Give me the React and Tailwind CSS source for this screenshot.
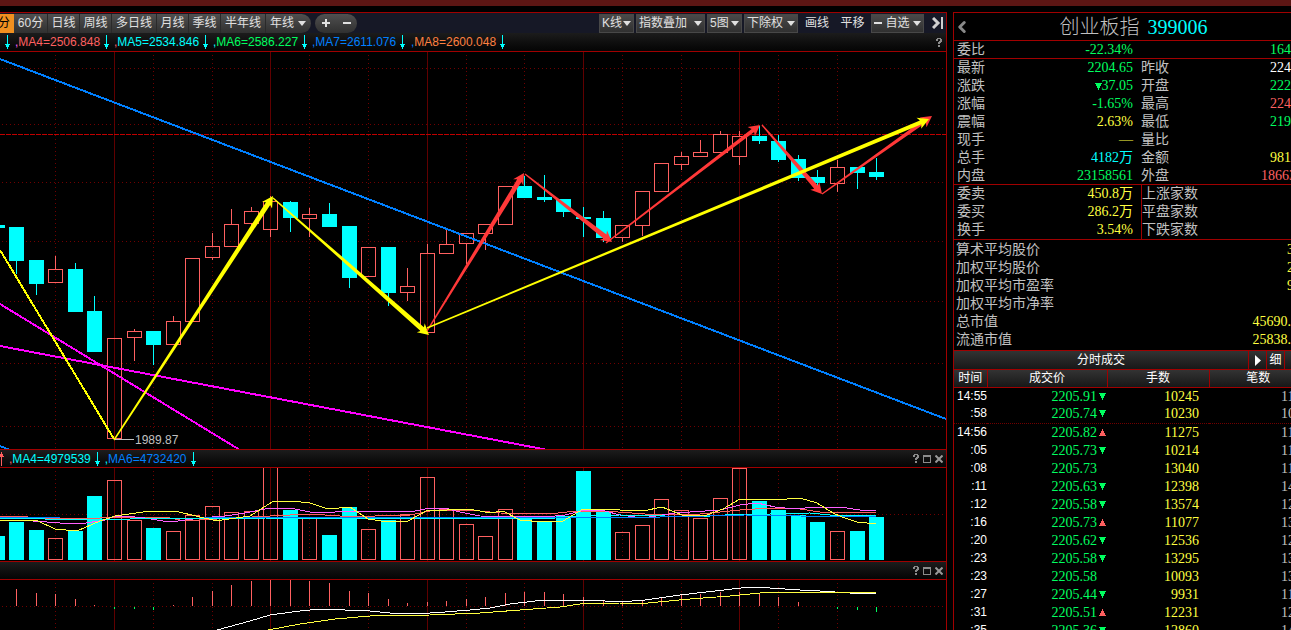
import React from 'react'
import { ChevronLeft } from 'lucide-react'

/* x, high, top, bottom, low, volume top, rising */
const candles = [
  [-10, 225, 225, 228, 228, 536, 0],
  [9, 227, 227, 261, 274, 522, 0],
  [29, 260, 260, 284, 295, 530, 0],
  [48, 256, 269, 283, 283, 538, 1],
  [68, 263, 269, 312, 312, 531, 0],
  [87, 296, 311, 352, 352, 496, 0],
  [107, 338, 338, 439, 439, 480, 1],
  [127, 329, 331, 338, 361, 520, 1],
  [146, 331, 331, 345, 365, 528, 0],
  [166, 316, 321, 345, 345, 531, 1],
  [185, 258, 258, 322, 322, 515, 1],
  [205, 233, 246, 258, 260, 506, 1],
  [224, 209, 224, 247, 247, 512, 1],
  [244, 207, 211, 224, 227, 511, 1],
  [263, 196, 201, 230, 237, 467, 1],
  [283, 201, 202, 218, 232, 510, 0],
  [302, 208, 214, 219, 237, 518, 1],
  [322, 203, 214, 227, 227, 535, 0],
  [342, 226, 226, 278, 288, 507, 0],
  [361, 247, 247, 277, 277, 529, 1],
  [381, 247, 247, 293, 306, 520, 0],
  [400, 268, 286, 293, 301, 514, 1],
  [420, 244, 253, 333, 333, 477, 1],
  [439, 229, 244, 254, 254, 509, 1],
  [459, 233, 233, 244, 264, 524, 1],
  [478, 224, 224, 234, 250, 536, 1],
  [498, 186, 186, 225, 225, 509, 1],
  [517, 176, 186, 198, 198, 518, 0],
  [537, 175, 197, 200, 202, 522, 0],
  [556, 199, 199, 212, 217, 516, 0],
  [576, 207, 217, 219, 237, 471, 0],
  [596, 211, 218, 238, 242, 512, 0],
  [615, 225, 225, 238, 242, 532, 1],
  [635, 191, 191, 226, 236, 525, 1],
  [654, 163, 163, 192, 192, 499, 1],
  [674, 152, 156, 165, 170, 510, 1],
  [693, 140, 152, 157, 157, 518, 1],
  [713, 131, 134, 153, 153, 498, 1],
  [732, 131, 136, 157, 165, 468, 1],
  [752, 126, 136, 141, 144, 501, 0],
  [771, 135, 141, 160, 162, 510, 0],
  [791, 155, 159, 178, 181, 515, 0],
  [810, 170, 177, 183, 186, 522, 0],
  [830, 160, 167, 184, 192, 531, 1],
  [850, 167, 167, 173, 189, 531, 0],
  [869, 158, 172, 177, 180, 517, 0],
]

/* MACD bars: x, y of the tip */
const macd = [
  [16, 589], [36, 593], [55, 594], [75, 599], [94, 605], [114, 608], [134, 608],
  [153, 609], [173, 605], [192, 597], [212, 591], [231, 585], [251, 581],
  [270, 580], [290, 580], [309, 581], [329, 583], [349, 591], [368, 593],
  [388, 599], [407, 603], [427, 602], [446, 601], [466, 599], [485, 597],
  [505, 593], [524, 592], [544, 592], [563, 594], [583, 597], [603, 601],
  [622, 602], [642, 600], [661, 597], [681, 595], [700, 594], [720, 592],
  [739, 592], [759, 593], [778, 597], [798, 602], [837, 608], [857, 609],
  [876, 611],
]

const volumeLines = [
  ['#ff6060', '0,516 20,516 35,518 100,518 130,517 165,517 180,520 200,520 235,518 270,516 310,514 340,516 375,516 410,515 430,511 460,510 480,511 500,513 550,514 575,511 605,511 645,514 700,514 740,510 770,508 800,509 820,512 876,512'],
  ['#ff60ff', '0,520 33,521 60,523 80,524 105,520 115,516 125,516 145,518 163,521 178,521 200,518 225,516 245,513 270,508 290,508 310,512 325,513 345,511 395,511 410,512 425,509 445,508 460,512 480,516 545,517 565,515 585,510 605,511 620,515 643,518 675,513 705,511 720,510 740,505 757,503 775,507 795,509 815,507 840,507 860,510 876,511'],
  ['#00ffff', '0,518 45,519 130,519 265,518 320,519 417,518 475,518 540,519 585,516 620,515 665,516 710,516 740,514 770,514 810,513 830,515 876,515'],
  ['#0080ff', '0,517 60,518 200,518 300,517 500,517 660,517 705,516 745,515 800,516 876,517'],
  ['#ffff40', '0,520 33,520 38,521 55,529 77,531 100,521 115,516 150,511 175,511 200,517 213,520 222,520 250,516 272,502 292,501 310,503 328,509 350,507 368,519 388,522 408,521 428,510 447,510 467,509 480,511 490,513 503,511 520,520 543,522 563,521 583,509 607,509 620,510 643,511 662,507 682,515 707,515 723,509 740,499 787,499 800,498 817,503 833,513 842,517 857,522 876,524'],
]

const gridDotted = [55, 153, 212, 309, 368, 466, 524, 622, 681, 778, 837]
const gridSolid = [114, 270, 427, 583, 739]

const ticks = [
  ['14:55', '2205.91', 'down', '10245', '11'],
  [':58', '2205.74', 'down', '10230', '10'],
  ['14:56', '2205.82', 'up', '11275', '11'],
  [':05', '2205.73', 'down', '10214', '11'],
  [':08', '2205.73', '', '13040', '11'],
  [':11', '2205.63', 'down', '12398', '14'],
  [':12', '2205.58', 'down', '13574', '12'],
  [':16', '2205.73', 'up', '11077', '13'],
  [':20', '2205.62', 'down', '12536', '12'],
  [':23', '2205.58', 'down', '13295', '13'],
  [':23', '2205.58', '', '10093', '13'],
  [':27', '2205.44', 'down', '9931', '11'],
  [':31', '2205.51', 'up', '12231', '12'],
  [':35', '2205.36', 'down', '12860', '14'],
]

const green = 'text-[#00ff60]'
const red = 'text-[#ff6060]'
const yellow = 'text-[#ffff40]'
const cyan = 'text-[#00ffff]'

const Grid = ({ top, bottom, rows }) => (
  <g shapeRendering="crispEdges">
    {gridSolid.map(x => (
      <rect key={x} x={x} y={top} width="1" height={bottom - top} fill="#600000" />
    ))}
    {gridDotted.map(x => (
      <line key={x} x1={x + 0.5} x2={x + 0.5} y1={top + 3} y2={bottom} stroke="#700000" strokeDasharray="1 3" />
    ))}
    {rows.map(y => (
      <line key={y} x1="2" x2="944" y1={y + 0.5} y2={y + 0.5} stroke="#700000" strokeDasharray="1 3" />
    ))}
  </g>
)

/* Arrow whose shaft widens towards the head */
const Arrow = ({ from, to, w, color }) => {
  const [x1, y1] = from
  const [x2, y2] = to
  const len = Math.hypot(x2 - x1, y2 - y1)
  const ux = (x2 - x1) / len
  const uy = (y2 - y1) / len
  const at = (d, side) => `${x1 + ux * d - uy * side},${y1 + uy * d + ux * side}`
  const points = [
    at(0, -0.7), at(len - 9, -w / 2), at(len - 11, -6), at(len, 0),
    at(len - 11, 6), at(len - 9, w / 2), at(0, 0.7),
  ].join(' ')
  return <polygon points={points} fill={color} />
}

const PriceChart = () => (
  <svg viewBox="0 52 946 397" className="block w-full shrink-0">
    <Grid top={52} bottom={449} rows={[68, 124, 182, 241, 301, 363, 426]} />
    <line x1="0" x2="946" y1="134.5" y2="134.5" stroke="#c00000" strokeDasharray="5 1" shapeRendering="crispEdges" />

    <g shapeRendering="crispEdges">
      {candles.map(([x, high, top, bottom, low, , up]) => (
        <g key={x} fill={up ? '#ff6060' : '#00ffff'}>
          <rect x={x + 7} y={high} width="1" height={top - high} />
          <rect x={x + 7} y={bottom} width="1" height={low - bottom} />
          {up ? (
            <rect x={x + 0.5} y={top + 0.5} width="14" height={bottom - top - 1} fill="none" stroke="#ff6060" />
          ) : (
            <rect x={x} y={top} width="15" height={bottom - top} />
          )}
        </g>
      ))}
    </g>

    <g fill="none" strokeWidth="2" shapeRendering="crispEdges">
      <path d="M0 59L946 419M0 446L10 450" stroke="#0080ff" />
      <path d="M0 304L240 450M0 346L548 450" stroke="#ff00ff" />
      <path d="M0 250L114 439" stroke="#ffff00" />
    </g>

    <Arrow from={[114, 440]} to={[273, 196]} w={5} color="#ffff00" />
    <Arrow from={[273, 198]} to={[429, 335]} w={5} color="#ffff00" />
    <Arrow from={[427, 331]} to={[524, 173]} w={5} color="#ff3838" />
    <Arrow from={[525, 174]} to={[612, 242]} w={5} color="#ff3838" />
    <Arrow from={[606, 243]} to={[760, 125]} w={4} color="#ff3838" />
    <Arrow from={[762, 125]} to={[822, 194]} w={5} color="#ff3838" />
    <Arrow from={[822, 194]} to={[932, 116]} w={4} color="#ff3838" />
    <Arrow from={[427, 328]} to={[929, 119]} w={4} color="#ffff00" />

    <path d="M115 439.5H134" stroke="#c0c0c0" />
    <text x="135" y="444" fill="#c0c0c0" fontSize="12">1989.87</text>
  </svg>
)

const VolumeChart = () => (
  <svg viewBox="0 468 946 93" className="block w-full shrink-0">
    <Grid top={468} bottom={561} rows={[514]} />
    <g shapeRendering="crispEdges">
      {candles.map(([x, , , , , top, up]) =>
        up ? (
          <rect key={x} x={x + 0.5} y={top + 0.5} width="14" height={559 - top} fill="none" stroke="#ff6060" />
        ) : (
          <rect key={x} x={x} y={top} width="15" height={560 - top} fill="#00ffff" />
        )
      )}
      {volumeLines.map(([color, points]) => (
        <polyline key={color} points={points} fill="none" stroke={color} />
      ))}
    </g>
  </svg>
)

const MacdChart = () => (
  <svg viewBox="0 580 946 50" className="block w-full shrink-0">
    <Grid top={580} bottom={630} rows={[606]} />
    <g shapeRendering="crispEdges">
      {macd.map(([x, y]) =>
        y < 606 ? (
          <rect key={x} x={x} y={y} width="1" height={606 - y} fill="#ff6060" />
        ) : (
          <rect key={x} x={x} y="607" width="1" height={y - 606} fill="#00ff60" />
        )
      )}
      <polyline
        points="217,630 250,621 270,615 300,611 320,609 370,611 400,614 430,613 445,612 470,610 490,608 510,604 535,601 555,600 590,600 620,602 645,600 680,595 715,591 750,587 770,588 800,590 820,591 850,593 876,594"
        fill="none"
        stroke="#fff"
      />
      <polyline
        points="268,630 300,624 335,619 370,616 430,615 480,613 520,610 560,607 580,604 620,603 648,603 690,599 730,596 760,593 790,592 876,592"
        fill="none"
        stroke="#ffff40"
      />
    </g>
  </svg>
)

const DownArrow = () => (
  <svg viewBox="0 0 5 14" className="h-[14px] w-[5px] shrink-0" fill="#00ffff" shapeRendering="crispEdges">
    <path d="M2 0h1v9h2v1h-1v2h-1v2h-1v-2h-1v-2h-1v-1h2z" />
  </svg>
)

const UpArrow = () => (
  <svg viewBox="0 0 5 14" className="h-[14px] w-[5px] shrink-0" fill="#ff6060" shapeRendering="crispEdges">
    <path d="M2 0h1v2h1v2h1v1h-2v9h-1v-9h-2v-1h1v-2h1z" />
  </svg>
)

const Caret = () => (
  <svg viewBox="0 0 8 5" className="h-[5px] w-2 shrink-0" fill="#e0e0e0">
    <path d="M0 0h8L4 5z" />
  </svg>
)

const Trend = ({ dir }) => (
  <svg viewBox="0 0 7 7" className="inline-block h-[7px] w-[7px] shrink-0" shapeRendering="crispEdges">
    {dir === 'down' && <path d="M0 0h7v1h-1v2h-1v2h-1v2h-1v-2h-1v-2h-1v-2h-1z" fill="#00ff60" />}
    {dir === 'up' && <path d="M3 0h1v2h1v2h1v2h1v1h-7v-1h1v-2h1v-2h1z" fill="#ff6060" />}
  </svg>
)

const HelpIcon = () => (
  <svg viewBox="0 0 6 9" className="h-[9px] w-[6px]" fill="#8c8c8c" shapeRendering="crispEdges">
    <path d="M1 0h4v1h1v3h-1v1h-1v1h-2v-2h1v-1h1v-2h-2v2h-2v-2h1zM2 7h2v2h-2z" />
  </svg>
)

const PaneHeader = ({ children }) => (
  <div className="flex h-[19px] shrink-0 items-center border-y border-[#a00000] bg-linear-to-b from-[#1c1c1c] to-[#050505] pr-[3px] text-xs">
    {children}
    <div className="ml-auto flex items-center gap-1">
      <button aria-label="帮助"><HelpIcon /></button>
      <button aria-label="最大化">
        <svg viewBox="0 0 8 8" className="h-2 w-2" fill="#8c8c8c" shapeRendering="crispEdges">
          <path d="M0 0h8v8h-8zM1 2v5h6v-5z" fillRule="evenodd" />
        </svg>
      </button>
      <button aria-label="关闭">
        <svg viewBox="0 0 8 8" className="h-2 w-2" stroke="#999" strokeWidth="2">
          <path d="M0.500 0.500l7 7M7.500 0.500l-7 7" />
        </svg>
      </button>
    </div>
  </div>
)

const Period = ({ children, wide }) => (
  <button className={`h-full border-r border-[#2a2a2a] text-center whitespace-nowrap ${wide ? 'w-[45px]' : 'w-8'}`}>
    {children}
  </button>
)

const ToolButton = ({ children, className }) => (
  <button className={`flex h-[19px] items-center justify-between border border-[#484848] bg-linear-to-b from-[#4a4a4a] to-[#303030] px-[2px] whitespace-nowrap ${className}`}>
    {children}
    <Caret />
  </button>
)

const Toolbar = () => (
  <div className="flex h-5 shrink-0 items-center bg-[#161826] text-xs text-[#e0e0e0]">
    <div className="flex h-[19px] items-center overflow-hidden rounded-r-full bg-linear-to-b from-[#505050] to-[#303030]">
      <button className="flex h-full w-[14px] justify-end bg-[#f09020] pr-1 text-black">
        <span className="leading-[19px]">分</span>
      </button>
      <button className="h-full w-[34px] border-r border-[#2a2a2a]">60分</button>
      <Period>日线</Period>
      <Period>周线</Period>
      <Period wide>多日线</Period>
      <Period>月线</Period>
      <Period>季线</Period>
      <Period wide>半年线</Period>
      <button className="flex h-full items-center gap-1 pr-[5px] pl-1 whitespace-nowrap">
        年线 <Caret />
      </button>
    </div>
    <div className="ml-1 flex h-[19px] w-[42px] items-center justify-around rounded-full bg-linear-to-b from-[#505050] to-[#303030]">
      <button aria-label="放大">
        <svg viewBox="0 0 8 8" className="h-2 w-2" fill="#e0e0e0"><path d="M3 0h2v3h3v2H5v3H3V5H0V3h3z" /></svg>
      </button>
      <button aria-label="缩小">
        <svg viewBox="0 0 8 8" className="h-2 w-2" fill="#e0e0e0"><path d="M0 3h8v2H0z" /></svg>
      </button>
    </div>
    <div className="ml-auto flex items-center gap-[2px] pr-[2px]">
      <ToolButton className="w-[35px]">K线</ToolButton>
      <ToolButton className="w-[69px]">指数叠加</ToolButton>
      <ToolButton className="w-[35px]">5图</ToolButton>
      <ToolButton className="w-[54px]">下除权</ToolButton>
      <button className="w-[34px] whitespace-nowrap">画线</button>
      <button className="w-[33px] whitespace-nowrap">平移</button>
      <ToolButton className="w-[53px]">
        <svg viewBox="0 0 8 2" className="h-[2px] w-2" fill="#e0e0e0"><path d="M0 0h8v2H0z" /></svg>
        自选
      </ToolButton>
      <button aria-label="收起" className="ml-[6px]">
        <svg viewBox="0 0 12 12" className="h-3 w-3" stroke="#d0d0d0" fill="none">
          <path d="M1 1l5 5-5 5" strokeWidth="3" />
          <path d="M10 0v12" strokeWidth="2" />
        </svg>
      </button>
    </div>
  </div>
)

const Average = ({ children, color, comma }) => (
  <span className="flex w-[99px] shrink-0 items-center gap-1">
    <span className={color}><span className={comma}>,</span>{children}</span>
    <DownArrow />
  </span>
)

const AverageBar = () => (
  <div className="flex h-[19px] shrink-0 items-center border-b border-[#a00000] bg-linear-to-b from-[#1c1c1c] to-[#050505] pr-1 pl-[5px] text-xs">
    <span className="w-[10px]"><DownArrow /></span>
    <Average color={red} comma="text-[#ff60ff]">MA4=2506.848</Average>
    <Average color={cyan} comma={red}>MA5=2534.846</Average>
    <Average color={green} comma={cyan}>MA6=2586.227</Average>
    <Average color="text-[#0080ff]" comma="text-[#0080ff]">MA7=2611.076</Average>
    <Average color="text-[#ff8040]" comma="text-[#0080ff]">MA8=2600.048</Average>
    <button aria-label="帮助" className="ml-auto"><HelpIcon /></button>
  </div>
)

const QuoteRow = ({ label, value, color, label2, value2, color2, split, height = 'h-[18px]' }) => (
  <div className={`flex items-center leading-[18px] ${height}`}>
    <span className="w-[60px] pl-[3px]">{label}</span>
    <span className={`w-[127px] pr-2 text-right ${color}`}>{value}</span>
    <span className={`h-full flex-1 ${split ? 'border-l border-[#a00000]' : ''}`}>{label2}</span>
    <span className={`w-[30px] text-right ${color2}`}>{value2}</span>
  </div>
)

const SumRow = ({ label, value, partial }) => (
  <div className="flex h-[18px] items-center justify-between pl-[2px] leading-[18px]">
    <span>{label}</span>
    <span className={`${yellow} ${partial ? 'w-1' : ''}`}>{value}</span>
  </div>
)

const QuotePanel = () => (
  <aside className="flex w-[338px] shrink-0 flex-col overflow-hidden border-t border-l border-[#a00000] font-['Liberation_Serif','Noto_Sans_CJK_SC',serif] text-sm text-[#c0c0c0]">
    <div className="flex h-7 shrink-0 items-center border-b border-[#a00000] text-xl leading-7 font-light">
      <button aria-label="返回" className="w-[14px]">
        <ChevronLeft className="-ml-px h-[18px] w-[18px] text-[#888]" strokeWidth={4} />
      </button>
      <h1 className="flex flex-1 justify-center gap-2 pl-2">
        创业板指 <span className={cyan}>399006</span>
      </h1>
    </div>
    <div className="shrink-0 border-b border-[#a00000]">
      <QuoteRow label="委比" value="-22.34%" color={green} value2="164" color2={green} height="h-[17px]" />
    </div>
    <div className="shrink-0 border-b border-[#a00000]">
      <QuoteRow label="最新" value="2204.65" color={green} label2="昨收" value2="224" color2="text-white" />
      <QuoteRow label="涨跌" value={<><Trend dir="down" />37.05</>} color={green} label2="开盘" value2="222" color2={green} />
      <QuoteRow label="涨幅" value="-1.65%" color={green} label2="最高" value2="224" color2={red} />
      <QuoteRow label="震幅" value="2.63%" color={yellow} label2="最低" value2="219" color2={green} />
      <QuoteRow label="现手" value="—" color={yellow} label2="量比" />
      <QuoteRow label="总手" value="4182万" color={cyan} label2="金额" value2="981" color2={yellow} />
      <QuoteRow label="内盘" value="23158561" color={green} label2="外盘" value2="18663" color2={red} height="h-[17px]" />
    </div>
    <div className="shrink-0 border-b border-[#a00000]">
      <QuoteRow split label="委卖" value="450.8万" color={yellow} label2="上涨家数" />
      <QuoteRow split label="委买" value="286.2万" color={yellow} label2="平盘家数" />
      <QuoteRow split label="换手" value="3.54%" color={yellow} label2="下跌家数" />
    </div>
    <div className="shrink-0 border-b border-[#a00000] py-px">
      <SumRow label="算术平均股价" value="3" partial />
      <SumRow label="加权平均股价" value="2" partial />
      <SumRow label="加权平均市盈率" value="9" partial />
      <SumRow label="加权平均市净率" value="" />
      <SumRow label="总市值" value="45690." />
      <SumRow label="流通市值" value="25838." />
    </div>

    <div className="flex h-[19px] shrink-0 items-center border-b border-[#a00000] bg-linear-to-b from-[#333] to-[#181818] text-xs leading-[18px] text-white">
      <h2 className="flex-1 text-center">分时成交</h2>
      <button aria-label="展开" className="flex h-full w-[18px] items-center justify-center border-l border-[#a00000]">
        <svg viewBox="0 0 6 11" className="h-[11px] w-[6px]" fill="#fff"><path d="M0 0l6 5.500L0 11z" /></svg>
      </button>
      <button className="h-full w-[18px] border-l border-[#a00000]">细</button>
      <span className="h-full w-[7px] border-l border-[#a00000]" />
    </div>
    <table className="w-full table-fixed border-collapse">
      <thead>
        <tr className="h-[17px] bg-linear-to-b from-[#333] to-[#181818] text-xs leading-4 text-white">
          <th className="w-[33px] border-r border-b border-[#a00000] p-0 font-normal">时间</th>
          <th className="w-[120px] border-r border-b border-[#a00000] p-0 font-normal">成交价</th>
          <th className="w-[102px] border-r border-b border-[#a00000] p-0 font-normal">手数</th>
          <th className="border-b border-[#a00000] py-0 pr-0 pl-4 font-normal">笔数</th>
        </tr>
      </thead>
      <tbody>
        {ticks.map(([time, price, dir, hands, count], i) => (
          <tr key={i} className={`h-[18px] leading-[17px] ${i === 1 ? 'border-b border-dotted border-[#700000]' : ''}`}>
            <td className="p-0 text-right font-['Liberation_Sans',sans-serif] text-xs leading-[17px] text-white">{time}</td>
            <td className={`p-0 ${green}`}>
              <span className="flex items-center justify-end gap-[2px] pr-px">{price}<Trend dir={dir} /></span>
            </td>
            <td className={`py-0 pr-[10px] pl-0 text-right ${yellow}`}>{hands}</td>
            <td className="py-0 pr-0 pl-[72px]">{count}</td>
          </tr>
        ))}
      </tbody>
    </table>
  </aside>
)

const App = () => {
  return (
    <div className="flex h-screen w-full flex-col overflow-hidden bg-black font-['Liberation_Sans','Noto_Sans_CJK_SC',sans-serif]">
      <div className="h-[6px] shrink-0 bg-[#5c1614]" />
      <div className="flex min-h-0 flex-1 gap-[6px] pt-[6px]">
        <main className="flex min-w-0 flex-1 flex-col overflow-hidden border-t border-r border-[#a00000]">
          <Toolbar />
          <AverageBar />
          <PriceChart />
          <PaneHeader>
            <span className="mr-[5px] -ml-px"><UpArrow /></span>
            <span className={`mr-1 ${cyan}`}><span className={red}>,</span>MA4=4979539</span>
            <DownArrow />
            <span className="mr-1 ml-[5px] text-[#0080ff]"><span className={cyan}>,</span>MA6=4732420</span>
            <DownArrow />
          </PaneHeader>
          <VolumeChart />
          <PaneHeader />
          <MacdChart />
        </main>
        <QuotePanel />
      </div>
    </div>
  )
}

export default App
